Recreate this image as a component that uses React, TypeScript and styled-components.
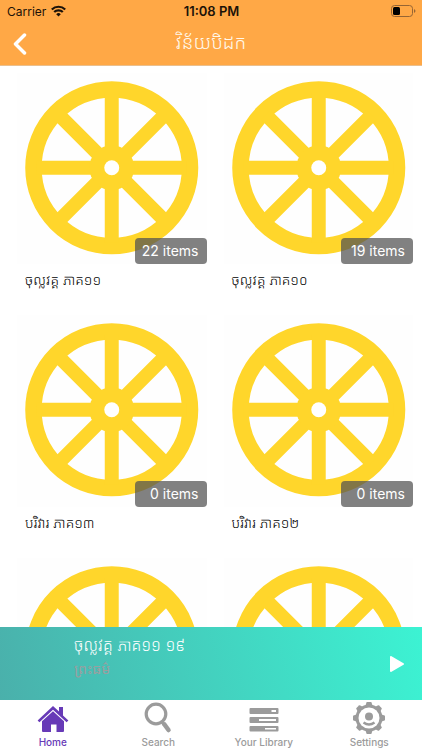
import React from "react";
import styled, { createGlobalStyle } from "styled-components";

const GlobalStyle = createGlobalStyle`
  *, *::before, *::after { box-sizing: border-box; }
  body { margin: 0; background: #fff; font-family: Inter, "Noto Sans", "Noto Sans Khmer", "Khmer OS", sans-serif; }
  button { font: inherit; border: 0; padding: 0; background: none; cursor: pointer; }
  svg { display: block; }
`;

const Screen = styled.div`
  display: flex;
  flex-direction: column;
  height: 100vh;
  overflow: hidden;
`;

const Header = styled.header`
  flex: none;
  background: #ffa846;
  border-bottom: 1px solid #eabf8e;
`;

const StatusBar = styled.div`
  display: grid;
  grid-template-columns: 1fr auto 1fr;
  align-items: center;
  height: 22px;
  padding: 0 6px 0 7px;
  font-size: 12px;
  color: #1c1208;
`;

const Carrier = styled.div`
  display: flex;
  align-items: center;
  gap: 5px;
`;

const Clock = styled.time`
  font-size: 13px;
  font-weight: 600;
`;

const Battery = styled.div`
  justify-self: end;
`;

const NavBar = styled.div`
  display: grid;
  grid-template-columns: 40px 1fr 40px;
  align-items: center;
  height: 43px;
`;

const BackButton = styled.button`
  display: flex;
  align-items: center;
  justify-content: center;
  height: 43px;
`;

const Title = styled.h1`
  margin: 0;
  padding-bottom: 2px;
  text-align: center;
  font-size: 19px;
  line-height: 40px;
  font-weight: 300;
  color: #fff8ec;
`;

const Main = styled.main`
  flex: 1;
  min-height: 0;
  overflow: hidden;
  padding: 7px 9px 0 17px;
`;

const Grid = styled.div`
  display: grid;
  grid-template-columns: 1fr 1fr;
  column-gap: 17px;
`;

const Card = styled.article`
  min-width: 0;
`;

const Art = styled.div`
  position: relative;
  aspect-ratio: 190 / 192;
  background: #fefefe;

  svg { width: 100%; height: 100%; }
`;

const Badge = styled.span`
  position: absolute;
  right: 0;
  bottom: 0;
  width: 72px;
  padding-right: 8px;
  border-radius: 4px;
  background: rgba(80, 80, 80, 0.72);
  color: #fff;
  font-size: 14px;
  line-height: 26px;
  text-align: right;
  white-space: nowrap;
`;

const Caption = styled.h2`
  margin: 0;
  height: 51px;
  padding: 2px 0 0 8px;
  font-size: 14px;
  line-height: 28px;
  font-weight: 300;
  color: #000;
  white-space: nowrap;
`;

const Player = styled.section`
  flex: none;
  display: flex;
  align-items: center;
  justify-content: space-between;
  height: 73px;
  padding: 0 10px 0 74px;
  background: linear-gradient(75deg, #4ab0ab 0%, #3cf3d3 100%);
`;

const Track = styled.div`
  display: flex;
  flex-direction: column;
  padding-bottom: 14px;
`;

const TrackTitle = styled.span`
  font-size: 16px;
  line-height: 24px;
  font-weight: 300;
  color: #fff;
`;

const TrackArtist = styled.span`
  font-size: 14px;
  line-height: 24px;
  color: #9a9fa0;
`;

const PlayButton = styled.button`
  display: flex;
  align-items: center;
  justify-content: center;
  width: 30px;
  height: 40px;
`;

const Tabs = styled.nav`
  flex: none;
  display: grid;
  grid-template-columns: repeat(4, 1fr);
  height: 50px;
  background: #fff;
`;

const Tab = styled.a<{ $active?: boolean }>`
  display: flex;
  flex-direction: column;
  align-items: center;
  gap: 1px;
  padding-top: 2px;
  color: ${(p) => (p.$active ? "#673ab7" : "#9b9b9b")};
  font-size: 10px;
  line-height: 14px;
  font-weight: 500;
  text-decoration: none;
`;

const Wheel = () => (
  <svg viewBox="-95 -95 190 192" aria-hidden="true">
    <circle r="78.5" fill="none" stroke="#ffd62b" strokeWidth="16.5" />
    <path d="M-75 0H75M0-75V75M-53-53L53 53M-53 53L53-53" stroke="#ffd62b" strokeWidth="14" />
    <circle r="22.5" fill="#ffd62b" />
    <circle r="7.5" fill="#fff" />
  </svg>
);

const HomeIcon = () => (
  <svg width="32" height="32" viewBox="0 0 32 32" fill="currentColor" aria-hidden="true">
    <path d="M16 4 22 9.5V5h4v8.4l5.4 5-1.8 1.9L16 7.8 2.4 20.3.6 18.4Z" />
    <path d="M16 9.2 27 19.3V29a1 1 0 0 1-1 1H19.5V22.500h-5.500V30H6a1 1 0 0 1-1-1V19.3Z" />
  </svg>
);

const SearchIcon = () => (
  <svg width="32" height="32" viewBox="0 0 32 32" fill="none" stroke="currentColor" aria-hidden="true">
    <circle cx="14" cy="12" r="9.8" strokeWidth="3.2" />
    <path d="m20 20 2 3" strokeWidth="3" />
    <path d="m22.5 22.5 4 5.5" strokeWidth="4.5" strokeLinecap="round" />
  </svg>
);

const LibraryIcon = () => (
  <svg width="32" height="32" viewBox="0 0 32 32" aria-hidden="true">
    <g fill="currentColor">
      <rect x="1.5" y="6" width="29" height="6" rx="1" />
      <rect x="1.5" y="15" width="29" height="6" rx="1" />
      <rect x="1.5" y="24" width="29" height="5.5" rx="1" />
    </g>
    <path d="M23.5 8h4.5v2h-4.5zM11 17h17v2H11zM17 26h11v1.5H17z" fill="#fff" />
  </svg>
);

const SettingsIcon = () => (
  <svg width="34" height="32" viewBox="-17 -16 34 32" aria-hidden="true">
    <circle r="13.5" fill="currentColor" />
    <g fill="currentColor">
      {[0, 45, 90, 135, 180, 225, 270, 315].map((angle) => (
        <path key={angle} d="M-4-11-2.5-15.5Q-2.3-16-1.8-16H1.8Q2.3-16 2.5-15.5L4-11Z" transform={`rotate(${angle})`} />
      ))}
    </g>
    <circle r="10.5" fill="#fff" />
    <circle cy="-1.5" r="4" fill="currentColor" />
    <path d="M-5.5 4.5Q0 8.500 5.500 4.5" fill="none" stroke="currentColor" strokeWidth="2.4" />
  </svg>
);

const books: { title?: string; count?: number }[] = [
  { title: "ចុល្លវគ្គ ភាគ១១", count: 22 },
  { title: "ចុល្លវគ្គ ភាគ១០", count: 19 },
  { title: "បរិវារ ភាគ១៣", count: 0 },
  { title: "បរិវារ ភាគ១២", count: 0 },
  {},
  {},
];

const tabs = [
  { label: "Home", Icon: HomeIcon },
  { label: "Search", Icon: SearchIcon },
  { label: "Your Library", Icon: LibraryIcon },
  { label: "Settings", Icon: SettingsIcon },
];

export default function App() {
  return (
    <Screen>
      <GlobalStyle />
      <Header>
        <StatusBar>
          <Carrier>
            Carrier
            <svg width="15" height="12" viewBox="0 0 15 12" fill="none" stroke="#1c1208" strokeWidth="2.2" aria-hidden="true">
              <path d="M.8 4.5a9.5 9.5 0 0 1 13.4 0M3.2 7.1a6 6 0 0 1 8.6 0" />
              <path d="M7.5 11.5 5.2 9.2a3.3 3.3 0 0 1 4.6 0Z" fill="#1c1208" stroke="none" />
            </svg>
          </Carrier>
          <Clock>11:08 PM</Clock>
          <Battery>
            <svg width="25" height="12" viewBox="0 0 25 12" aria-hidden="true">
              <rect x=".5" y=".5" width="21" height="11" rx="3" fill="none" stroke="#966534" />
              <rect x="2" y="2" width="7" height="8" rx="1.5" fill="#000" />
              <path d="M23 4q3 2 0 4Z" fill="#966534" />
            </svg>
          </Battery>
        </StatusBar>
        <NavBar>
          <BackButton aria-label="Back">
            <svg width="14" height="22" viewBox="0 0 14 22" fill="none" stroke="#fff" strokeWidth="3.5" strokeLinecap="round" strokeLinejoin="round" aria-hidden="true">
              <path d="M11.5 2 2.5 11l9 9" />
            </svg>
          </BackButton>
          <Title>វិន័យបិដក</Title>
        </NavBar>
      </Header>
      <Main>
        <Grid>
          {books.map((book, i) => (
            <Card key={i}>
              <Art>
                <Wheel />
                {book.count !== undefined && <Badge>{book.count} items</Badge>}
              </Art>
              {book.title && <Caption>{book.title}</Caption>}
            </Card>
          ))}
        </Grid>
      </Main>
      <Player>
        <Track>
          <TrackTitle>ចុល្លវគ្គ ភាគ១១ ១៩</TrackTitle>
          <TrackArtist>ព្រះធម៌</TrackArtist>
        </Track>
        <PlayButton aria-label="Play">
          <svg width="14" height="16" viewBox="0 0 14 16" fill="#fff" stroke="#fff" strokeWidth="2" strokeLinejoin="round" aria-hidden="true">
            <path d="M1 1v14l12-7Z" />
          </svg>
        </PlayButton>
      </Player>
      <Tabs>
        {tabs.map(({ label, Icon }, i) => (
          <Tab key={label} href="#" $active={i === 0}>
            <Icon />
            {label}
          </Tab>
        ))}
      </Tabs>
    </Screen>
  );
}
